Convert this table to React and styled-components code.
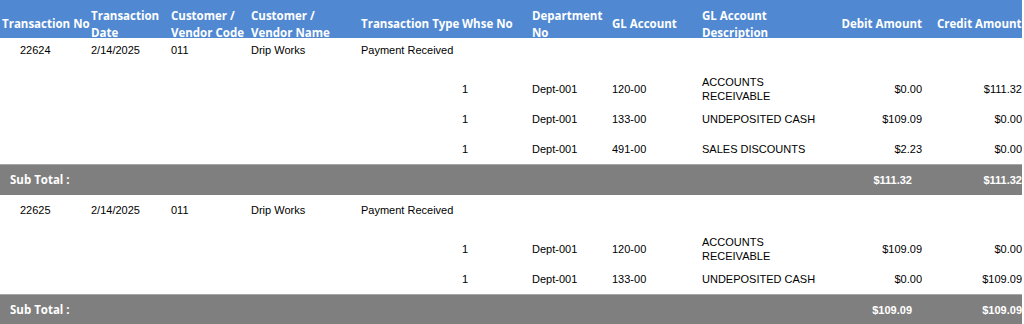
import React from "react";
import styled, { createGlobalStyle } from "styled-components";

const Global = createGlobalStyle`
  html, body { margin: 0; padding: 0; background: #ffffff; overflow: hidden; }
  * { box-sizing: border-box; }
`;

const COLS = "89px 80px 80px 110px 101px 70px 80px 90px 132px 103px 87px";

const Table = styled.div`
  width: 1022px;
  overflow: hidden;
  font-family: "Liberation Sans", Arial, sans-serif;
  font-size: 11px;
  line-height: 14px;
  color: #000;
`;

const HeaderRow = styled.div`
  display: grid;
  grid-template-columns: ${COLS};
  height: 38px;
  background: #5089d2;
  color: #ffffff;
  font-family: "Open Sans", sans-serif;
  font-weight: 700;
  font-size: 11.5px;
  line-height: 16.7px;
`;

const HeadCell = styled.div`
  display: flex;
  align-items: center;
  padding: 8px ${(p) => p.$pr ?? 0}px 0 2px;
  justify-content: ${(p) => (p.$right ? "flex-end" : "flex-start")};
  white-space: ${(p) => (p.$nowrap ? "nowrap" : "normal")};
  max-width: ${(p) => (p.$maxw ? `${p.$maxw}px` : "none")};
  overflow: ${(p) => (p.$clip ? "hidden" : "visible")};
  min-width: 0;
`;

const Group = styled.div`
  margin-bottom: 3px;
`;

const MasterRow = styled.div`
  display: grid;
  grid-template-columns: ${COLS};
  height: 36px;
  padding-top: 5px;
`;

const DetailRow = styled.div`
  display: grid;
  grid-template-columns: ${COLS};
  height: 30px;
  align-items: center;
`;

const Cell = styled.div`
  padding-left: ${(p) => p.$pl ?? 2}px;
  padding-right: ${(p) => p.$pr ?? 0}px;
  text-align: ${(p) => (p.$right ? "right" : "left")};
  white-space: nowrap;
`;

const DescCell = styled(Cell)`
  max-width: 122px;
  white-space: normal;
`;

const SubTotalRow = styled.div`
  display: grid;
  grid-template-columns: ${COLS};
  height: 31px;
  align-items: center;
  background: #7f7f7f;
  border-top: 1px solid #a6a6a6;
  color: #ffffff;
  font-weight: 700;
`;

const SubLabel = styled.div`
  grid-column: 1 / span 9;
  padding-left: 10px;
  font-family: "Open Sans", sans-serif;
  font-size: 11.5px;
`;

const SubAmount = styled.div`
  text-align: right;
  padding-right: ${(p) => p.$pr}px;
  white-space: nowrap;
`;

const headers = [
  { t: "Transaction No", nowrap: true },
  { t: "Transaction Date" },
  { t: "Customer / Vendor Code" },
  { t: "Customer / Vendor Name", maxw: 84 },
  { t: "Transaction Type", nowrap: true },
  { t: "Whse No", nowrap: true },
  { t: "Department No" },
  { t: "GL Account", nowrap: true },
  { t: "GL Account Description" },
  { t: "Debit Amount", right: true, nowrap: true, pr: 13 },
  { t: "Credit Amount", nowrap: true },
];

const groups = [
  {
    no: "22624",
    date: "2/14/2025",
    code: "011",
    name: "Drip Works",
    type: "Payment Received",
    lines: [
      { whse: "1", dept: "Dept-001", gl: "120-00", desc: "ACCOUNTS RECEIVABLE", debit: "$0.00", credit: "$111.32" },
      { whse: "1", dept: "Dept-001", gl: "133-00", desc: "UNDEPOSITED CASH", debit: "$109.09", credit: "$0.00" },
      { whse: "1", dept: "Dept-001", gl: "491-00", desc: "SALES DISCOUNTS", debit: "$2.23", credit: "$0.00" },
    ],
    totalDebit: "$111.32",
    totalCredit: "$111.32",
  },
  {
    no: "22625",
    date: "2/14/2025",
    code: "011",
    name: "Drip Works",
    type: "Payment Received",
    lines: [
      { whse: "1", dept: "Dept-001", gl: "120-00", desc: "ACCOUNTS RECEIVABLE", debit: "$109.09", credit: "$0.00" },
      { whse: "1", dept: "Dept-001", gl: "133-00", desc: "UNDEPOSITED CASH", debit: "$0.00", credit: "$109.09" },
    ],
    totalDebit: "$109.09",
    totalCredit: "$109.09",
  },
];

export default function App() {
  return (
    <>
      <Global />
      <Table>
        <HeaderRow>
          {headers.map((h) => (
            <HeadCell key={h.t} $right={h.right} $nowrap={h.nowrap} $maxw={h.maxw} $pr={h.pr}>
              {h.t}
            </HeadCell>
          ))}
        </HeaderRow>
        {groups.map((g) => (
          <Group key={g.no}>
            <MasterRow>
              <Cell $pl={20}>{g.no}</Cell>
              <Cell>{g.date}</Cell>
              <Cell>{g.code}</Cell>
              <Cell>{g.name}</Cell>
              <Cell>{g.type}</Cell>
            </MasterRow>
            {g.lines.map((l, i) => (
              <DetailRow key={i}>
                <Cell />
                <Cell />
                <Cell />
                <Cell />
                <Cell />
                <Cell>{l.whse}</Cell>
                <Cell>{l.dept}</Cell>
                <Cell>{l.gl}</Cell>
                <DescCell>{l.desc}</DescCell>
                <Cell $right $pr={13}>{l.debit}</Cell>
                <Cell $right $pr={0}>{l.credit}</Cell>
              </DetailRow>
            ))}
            <SubTotalRow>
              <SubLabel>Sub Total :</SubLabel>
              <SubAmount $pr={23}>{g.totalDebit}</SubAmount>
              <SubAmount $pr={0}>{g.totalCredit}</SubAmount>
            </SubTotalRow>
          </Group>
        ))}
      </Table>
    </>
  );
}
